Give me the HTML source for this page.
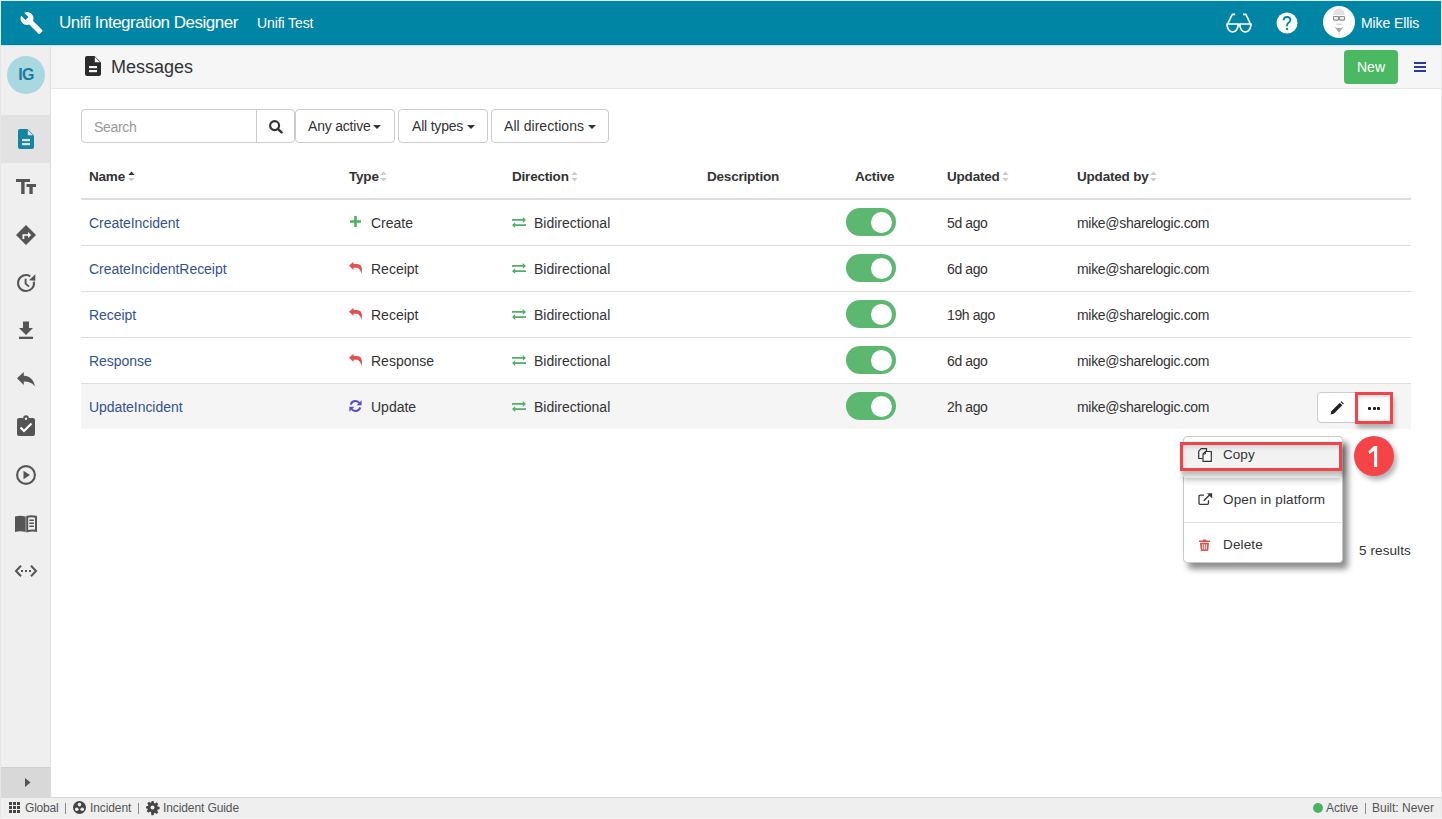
<!DOCTYPE html>
<html><head><meta charset="utf-8">
<style>
*{box-sizing:border-box;margin:0;padding:0}
html,body{width:1442px;height:819px;overflow:hidden}
body{position:relative;background:#fff;font-family:"Liberation Sans",sans-serif;color:#333;font-size:14px}
.a{position:absolute}
.t{position:absolute;white-space:nowrap;line-height:1}
svg{position:absolute;overflow:visible}
.caret{position:absolute;width:0;height:0;border-left:4px solid transparent;border-right:4px solid transparent;border-top:4px solid #333}
.link{color:#34528f}
.tog{position:absolute;left:846px;width:50px;height:28px;border-radius:14px;background:#5cb870}
.tog:after{content:"";position:absolute;left:25px;top:3.5px;width:21px;height:21px;border-radius:50%;background:#fff}
.rb{position:absolute;left:81px;width:1330px;height:1px;background:#ddd}
.hd{font-size:13.5px;font-weight:bold;color:#333;letter-spacing:-0.2px}
.srt{position:absolute;width:6px;height:10px}
</style></head><body>
<!-- frame -->
<div class="a" style="left:0;top:0;width:1442px;height:1px;background:#d9f1f7"></div>
<div class="a" style="left:0;top:0;width:1px;height:46px;background:#d6eef4"></div><div class="a" style="left:0;top:46px;width:1px;height:773px;background:#e6e6e6"></div>
<div class="a" style="left:1441px;top:0;width:1px;height:819px;background:#e8e8e8"></div>
<div class="a" style="left:0;top:818px;width:1442px;height:1px;background:#f4f4f4"></div>

<!-- header -->
<div class="a" id="hdr" style="left:1px;top:1px;width:1440px;height:44px;background:#0185a4"></div>
<svg style="left:19px;top:11px" width="25" height="24" viewBox="0 0 24 24"><path fill="#fff" d="M22.7 19l-9.1-9.1c.9-2.3.4-5-1.5-6.9-2-2-5-2.4-7.4-1.3L9 6 6 9 1.6 4.7C.4 7.1.9 10.1 2.9 12.1c1.9 1.9 4.6 2.4 6.9 1.5l9.1 9.1c.4.4 1 .4 1.4 0l2.3-2.3c.5-.4.5-1.1.1-1.4z"/></svg>
<div class="t" style="left:59px;top:14px;font-size:17px;letter-spacing:-0.5px;color:#fff">Unifi Integration Designer</div>
<div class="t" style="left:257px;top:16px;font-size:14px;color:#fff;letter-spacing:-0.1px">Unifi Test</div>
<!-- glasses -->
<svg style="left:1226px;top:13px" width="26" height="20" viewBox="0 0 26 20"><g fill="none" stroke="#fff" stroke-width="1.7" stroke-linejoin="round"><path d="M1 11H12.3A5.65 8 0 0 1 1 11z"/><path d="M13.7 11H25A5.65 8 0 0 1 13.7 11z"/><path d="M1.3 11.5L6.3 1.3H9.2M24.7 11.5L19.9 1.3H17"/></g></svg>
<!-- help -->
<svg style="left:1276px;top:12px" width="22" height="22" viewBox="0 0 22 22"><circle cx="11" cy="11" r="10.5" fill="#fff"/><path d="M7.6 8.3Q7.8 5 11 5Q14.4 5 14.4 8Q14.4 9.8 12.4 10.9Q11 11.7 11 13.5V14.3" fill="none" stroke="#0185a4" stroke-width="1.8"/><circle cx="11" cy="17" r="1.15" fill="#0185a4"/></svg>
<!-- avatar -->
<svg style="left:1323px;top:6px" width="32" height="32" viewBox="0 0 32 32"><circle cx="16" cy="16" r="16" fill="#fff"/><path d="M10.2 9Q10.5 2.4 16 2.4Q21.5 2.4 21.8 9z" fill="#e2e2e2"/><rect x="10.5" y="10.5" width="5" height="3.6" rx=".6" fill="#f2f2f2" stroke="#8c8c8c" stroke-width="1.1"/><rect x="16.5" y="10.5" width="5" height="3.6" rx=".6" fill="#f2f2f2" stroke="#8c8c8c" stroke-width="1.1"/><path d="M13.5 18.2h5" stroke="#cfcfcf" stroke-width="1.4"/><path d="M11.8 21Q16 23 20.2 21L16.5 26.2H15.5z" fill="#a8a8a8"/><path d="M15.3 26h1.4l-.2 5h-1z" fill="#e6e6e6"/></svg>
<div class="t" style="left:1361px;top:16px;font-size:14px;color:#fff;letter-spacing:-0.1px">Mike Ellis</div>

<div class="a" style="left:1px;top:44px;width:1440px;height:1px;background:#0d7590"></div>
<!-- sidebar -->
<div class="a" style="left:1px;top:45px;width:49px;height:752px;background:#efefef"></div>
<div class="a" style="left:50px;top:45px;width:1px;height:752px;background:#dedede"></div>
<div class="a" style="left:7px;top:56px;width:38px;height:38px;border-radius:50%;background:#aad8e1"></div>
<div class="t" style="left:7px;top:67px;width:38px;text-align:center;font-size:16px;font-weight:bold;color:#1b7d9c;letter-spacing:-0.6px;transform:scaleY(1.08)">IG</div>
<div class="a" style="left:1px;top:115px;width:49px;height:48px;background:#e2e2e2"></div>
<div class="a" style="left:1px;top:768px;width:49px;height:29px;background:#d8d8d8"></div>
<div class="a" style="left:1px;top:767px;width:49px;height:1px;background:#cfcfcf"></div>
<svg style="left:25px;top:778px" width="6" height="9" viewBox="0 0 6 9"><path d="M0 0L5.5 4.5L0 9z" fill="#555"/></svg>
<!-- sidebar icons -->
<svg style="left:18px;top:129px" width="16" height="20" viewBox="0 0 16 20"><path d="M2 0H9.5L16 6.5V18a2 2 0 0 1-2 2H2a2 2 0 0 1-2-2V2a2 2 0 0 1 2-2z" fill="#1684a3"/><path d="M9.8 1L15 6.2H9.8z" fill="#e2e2e2"/><rect x="4" y="10" width="8" height="2.2" fill="#e2e2e2"/><rect x="4" y="14" width="8" height="2.2" fill="#e2e2e2"/></svg>
<svg style="left:16px;top:179px" width="20" height="15" viewBox="0 0 20 15"><g fill="#555"><rect x="0" y="0" width="14" height="3"/><rect x="5.2" y="0" width="3.4" height="15"/><rect x="10.5" y="5" width="9.5" height="3"/><rect x="13.4" y="5" width="3.3" height="10"/></g></svg>
<svg style="left:16px;top:225px" width="20" height="20" viewBox="0 0 20 20"><path d="M10 0L20 10L10 20L0 10z" fill="#555"/><path d="M6.5 14V9.2h5.5V7l3.2 3-3.2 3v-2.2H8.3V14z" fill="#fff"/></svg>
<svg style="left:16px;top:273px" width="20" height="20" viewBox="0 0 20 20"><path d="M14.3 3.3A8 8 0 1 0 17.9 8.6" fill="none" stroke="#555" stroke-width="2"/><path d="M19.3 1.3V7.7L13 7.2z" fill="#555"/><path d="M9.6 5.8V10.6L13 13.6" fill="none" stroke="#555" stroke-width="1.9"/></svg>
<svg style="left:19px;top:321px" width="14" height="18" viewBox="0 0 14 18"><path d="M4 0.5H10V7H14L7 14L0 7H4z" fill="#555"/><rect x="0" y="15.7" width="14" height="2.3" fill="#555"/></svg>
<svg style="left:17px;top:372px" width="18" height="15" viewBox="0 0 18 15"><path d="M0 6.3L6.8 0V3.8C13 4 16.8 8 18 14.5C15.5 11 12 9.5 6.8 9.5V13z" fill="#555"/></svg>
<svg style="left:17px;top:416px" width="18" height="20" viewBox="0 0 18 20"><path d="M2 2H6.2A2.8 2.8 0 0 1 11.8 2H16a2 2 0 0 1 2 2V18a2 2 0 0 1-2 2H2a2 2 0 0 1-2-2V4a2 2 0 0 1 2-2z" fill="#555"/><circle cx="9" cy="2.8" r="1.2" fill="#efefef"/><path d="M3.5 11.5L7 15L14.5 7.5" fill="none" stroke="#fff" stroke-width="2.2"/></svg>
<svg style="left:16px;top:465px" width="20" height="20" viewBox="0 0 20 20"><circle cx="10" cy="10" r="8.9" fill="none" stroke="#555" stroke-width="2.1"/><path d="M7.5 5.8L14 10L7.5 14.2z" fill="#555"/></svg>
<svg style="left:15px;top:515px" width="22" height="17" viewBox="0 0 22 17"><path d="M0 1.5Q5 0 10.7 1.5V17Q5 15.5 0 17z" fill="#555"/><path d="M12.2 1.8Q16.5 0.5 21 1.8V15.8Q16.5 14.8 12.2 16.2z" fill="none" stroke="#555" stroke-width="2"/><path d="M14.3 5.3h4.6M14.3 8.3h4.6M14.3 11.3h4.6" stroke="#555" stroke-width="1.5"/></svg>
<svg style="left:15px;top:565px" width="22" height="12" viewBox="0 0 22 12"><path d="M6 0.8L1 6L6 11.2M16 0.8L21 6L16 11.2" fill="none" stroke="#555" stroke-width="2"/><rect x="6" y="5" width="2" height="2" fill="#555"/><rect x="10" y="5" width="2" height="2" fill="#555"/><rect x="14" y="5" width="2" height="2" fill="#555"/></svg>

<!-- page header -->
<div class="a" style="left:51px;top:45px;width:1390px;height:43px;background:#f6f6f6"></div>
<div class="a" style="left:51px;top:88px;width:1390px;height:1px;background:#e6e6e6"></div>
<div class="a" style="left:1px;top:45px;width:1440px;height:1px;background:#c6eaf4"></div>
<div class="a" style="left:1px;top:46px;width:1440px;height:1px;background:#e4eff2"></div>
<svg style="left:85px;top:56px" width="16" height="20" viewBox="0 0 16 20"><path d="M2 0H9.5L16 6.5V18a2 2 0 0 1-2 2H2a2 2 0 0 1-2-2V2a2 2 0 0 1 2-2z" fill="#2b2b2b"/><path d="M9.8 1L15 6.2H9.8z" fill="#f6f6f6"/><rect x="4" y="10" width="8" height="2.2" fill="#f6f6f6"/><rect x="4" y="14" width="8" height="2.2" fill="#f6f6f6"/></svg>
<div class="t" style="left:111px;top:58px;font-size:18px;color:#333">Messages</div>
<div class="a" style="left:1344px;top:50px;width:54px;height:34px;border-radius:4px;background:#4bb862"></div>
<div class="t" style="left:1344px;top:60px;width:54px;text-align:center;font-size:14px;color:#fff">New</div>
<div class="a" style="left:1414px;top:62px;width:12px;height:2px;background:#2d3a9c"></div>
<div class="a" style="left:1414px;top:66px;width:12px;height:2px;background:#2d3a9c"></div>
<div class="a" style="left:1414px;top:70px;width:12px;height:2px;background:#2d3a9c"></div>

<!-- filters -->
<div class="a" style="left:81px;top:109px;width:214px;height:34px;border:1px solid #ccc;border-radius:4px;background:#fff"></div>
<div class="a" style="left:256px;top:110px;width:1px;height:32px;background:#ccc"></div>
<div class="t" style="left:94px;top:120px;font-size:14px;color:#999;letter-spacing:-0.3px">Search</div>
<svg style="left:269px;top:120px" width="14" height="13" viewBox="0 0 14 13"><circle cx="5.6" cy="5.6" r="4.5" fill="none" stroke="#333" stroke-width="2.1"/><path d="M8.8 8.8L12.6 12.4" stroke="#333" stroke-width="2.4" stroke-linecap="round"/></svg>
<div class="a" style="left:295px;top:109px;width:100px;height:34px;border:1px solid #ccc;border-radius:4px;background:#fff"></div>
<div class="t" style="left:308px;top:119px;font-size:14px;color:#333;letter-spacing:-0.2px">Any active</div>
<div class="caret" style="left:373px;top:125px"></div>
<div class="a" style="left:398px;top:109px;width:90px;height:34px;border:1px solid #ccc;border-radius:4px;background:#fff"></div>
<div class="t" style="left:412px;top:119px;font-size:14px;color:#333;letter-spacing:-0.2px">All types</div>
<div class="caret" style="left:467px;top:125px"></div>
<div class="a" style="left:491px;top:109px;width:118px;height:34px;border:1px solid #ccc;border-radius:4px;background:#fff"></div>
<div class="t" style="left:504px;top:119px;font-size:14px;color:#333;letter-spacing:0.05px">All directions</div>
<div class="caret" style="left:588px;top:125px"></div>
<!-- table header -->
<div class="t hd" style="left:89px;top:169.5px">Name</div>
<svg style="left:128px;top:171px" width="7" height="11" viewBox="0 0 7 11"><path d="M0.3 4L3.5 0.6L6.7 4z" fill="#333"/><path d="M0.3 7L3.5 10.4L6.7 7z" fill="#ccc"/></svg>
<div class="t hd" style="left:349px;top:169.5px">Type</div>
<svg style="left:380px;top:171px" width="7" height="11" viewBox="0 0 7 11"><path d="M0.3 4L3.5 0.6L6.7 4z" fill="#ccc"/><path d="M0.3 7L3.5 10.4L6.7 7z" fill="#ccc"/></svg>
<div class="t hd" style="left:512px;top:169.5px">Direction</div>
<svg style="left:571px;top:171px" width="7" height="11" viewBox="0 0 7 11"><path d="M0.3 4L3.5 0.6L6.7 4z" fill="#ccc"/><path d="M0.3 7L3.5 10.4L6.7 7z" fill="#ccc"/></svg>
<div class="t hd" style="left:707px;top:169.5px">Description</div>
<div class="t hd" style="left:855px;top:169.5px">Active</div>
<div class="t hd" style="left:947px;top:169.5px">Updated</div>
<svg style="left:1002px;top:171px" width="7" height="11" viewBox="0 0 7 11"><path d="M0.3 4L3.5 0.6L6.7 4z" fill="#ccc"/><path d="M0.3 7L3.5 10.4L6.7 7z" fill="#ccc"/></svg>
<div class="t hd" style="left:1077px;top:169.5px">Updated by</div>
<svg style="left:1150px;top:171px" width="7" height="11" viewBox="0 0 7 11"><path d="M0.3 4L3.5 0.6L6.7 4z" fill="#ccc"/><path d="M0.3 7L3.5 10.4L6.7 7z" fill="#ccc"/></svg>
<div class="a" style="left:81px;top:198px;width:1330px;height:2px;background:#ddd"></div>
<div class="a" style="left:81px;top:384px;width:1330px;height:45px;background:#f5f5f5"></div>
<div class="rb" style="top:245px"></div>
<div class="t link" style="left:89px;top:216px;font-size:14px;letter-spacing:-0.05px">CreateIncident</div>
<svg style="left:350px;top:216px" width="11" height="11" viewBox="0 0 11 11"><path d="M4.2 0h2.6v4.2H11v2.6H6.8V11H4.2V6.8H0V4.2h4.2z" fill="#4bb462"/></svg>
<div class="t" style="left:371px;top:216px;font-size:14px">Create</div>
<svg style="left:512px;top:217px" width="14" height="11" viewBox="0 0 14 11"><path d="M0 2H10.8V0L14 2.9L10.8 5.8V3.8H0z" fill="#4db064"/><path d="M14 7.2H3.2V5.3L0 8.1L3.2 11V9H14z" fill="#4db064"/></svg>
<div class="t" style="left:534px;top:216px;font-size:14px">Bidirectional</div>
<div class="tog" style="top:208px"></div>
<div class="t" style="left:947px;top:216px;font-size:14px;letter-spacing:-0.4px">5d ago</div>
<div class="t" style="left:1077px;top:216px;font-size:14px;letter-spacing:-0.3px">mike@sharelogic.com</div>
<div class="rb" style="top:291px"></div>
<div class="t link" style="left:89px;top:262px;font-size:14px;letter-spacing:-0.05px">CreateIncidentReceipt</div>
<svg style="left:349px;top:261px" width="14" height="14" viewBox="0 0 14 14"><path d="M0 4.8L4.5 0.7V2.9H8Q13 3 13 9Q13 11.5 12.3 13Q12 8.5 8.3 6.7H4.5V9z" fill="#e3524f"/></svg>
<div class="t" style="left:371px;top:262px;font-size:14px">Receipt</div>
<svg style="left:512px;top:263px" width="14" height="11" viewBox="0 0 14 11"><path d="M0 2H10.8V0L14 2.9L10.8 5.8V3.8H0z" fill="#4db064"/><path d="M14 7.2H3.2V5.3L0 8.1L3.2 11V9H14z" fill="#4db064"/></svg>
<div class="t" style="left:534px;top:262px;font-size:14px">Bidirectional</div>
<div class="tog" style="top:254px"></div>
<div class="t" style="left:947px;top:262px;font-size:14px;letter-spacing:-0.4px">6d ago</div>
<div class="t" style="left:1077px;top:262px;font-size:14px;letter-spacing:-0.3px">mike@sharelogic.com</div>
<div class="rb" style="top:337px"></div>
<div class="t link" style="left:89px;top:308px;font-size:14px;letter-spacing:-0.05px">Receipt</div>
<svg style="left:349px;top:307px" width="14" height="14" viewBox="0 0 14 14"><path d="M0 4.8L4.5 0.7V2.9H8Q13 3 13 9Q13 11.5 12.3 13Q12 8.5 8.3 6.7H4.5V9z" fill="#e3524f"/></svg>
<div class="t" style="left:371px;top:308px;font-size:14px">Receipt</div>
<svg style="left:512px;top:309px" width="14" height="11" viewBox="0 0 14 11"><path d="M0 2H10.8V0L14 2.9L10.8 5.8V3.8H0z" fill="#4db064"/><path d="M14 7.2H3.2V5.3L0 8.1L3.2 11V9H14z" fill="#4db064"/></svg>
<div class="t" style="left:534px;top:308px;font-size:14px">Bidirectional</div>
<div class="tog" style="top:300px"></div>
<div class="t" style="left:947px;top:308px;font-size:14px;letter-spacing:-0.4px">19h ago</div>
<div class="t" style="left:1077px;top:308px;font-size:14px;letter-spacing:-0.3px">mike@sharelogic.com</div>
<div class="rb" style="top:383px"></div>
<div class="t link" style="left:89px;top:354px;font-size:14px;letter-spacing:-0.05px">Response</div>
<svg style="left:349px;top:353px" width="14" height="14" viewBox="0 0 14 14"><path d="M0 4.8L4.5 0.7V2.9H8Q13 3 13 9Q13 11.5 12.3 13Q12 8.5 8.3 6.7H4.5V9z" fill="#e3524f"/></svg>
<div class="t" style="left:371px;top:354px;font-size:14px">Response</div>
<svg style="left:512px;top:355px" width="14" height="11" viewBox="0 0 14 11"><path d="M0 2H10.8V0L14 2.9L10.8 5.8V3.8H0z" fill="#4db064"/><path d="M14 7.2H3.2V5.3L0 8.1L3.2 11V9H14z" fill="#4db064"/></svg>
<div class="t" style="left:534px;top:354px;font-size:14px">Bidirectional</div>
<div class="tog" style="top:346px"></div>
<div class="t" style="left:947px;top:354px;font-size:14px;letter-spacing:-0.4px">6d ago</div>
<div class="t" style="left:1077px;top:354px;font-size:14px;letter-spacing:-0.3px">mike@sharelogic.com</div>
<div class="t link" style="left:89px;top:400px;font-size:14px;letter-spacing:-0.05px">UpdateIncident</div>
<svg style="left:349px;top:400px" width="13" height="12" viewBox="0 0 13 12"><path d="M10.6 3.2A5 5 0 0 0 1.7 4.6" fill="none" stroke="#5a4fcf" stroke-width="2"/><path d="M12.6 0.3V5.3H7.6z" fill="#5a4fcf"/><path d="M2.4 8.8A5 5 0 0 0 11.3 7.4" fill="none" stroke="#5a4fcf" stroke-width="2"/><path d="M0.4 11.7V6.7H5.4z" fill="#5a4fcf"/></svg>
<div class="t" style="left:371px;top:400px;font-size:14px">Update</div>
<svg style="left:512px;top:401px" width="14" height="11" viewBox="0 0 14 11"><path d="M0 2H10.8V0L14 2.9L10.8 5.8V3.8H0z" fill="#4db064"/><path d="M14 7.2H3.2V5.3L0 8.1L3.2 11V9H14z" fill="#4db064"/></svg>
<div class="t" style="left:534px;top:400px;font-size:14px">Bidirectional</div>
<div class="tog" style="top:392px"></div>
<div class="t" style="left:947px;top:400px;font-size:14px;letter-spacing:-0.4px">2h ago</div>
<div class="t" style="left:1077px;top:400px;font-size:14px;letter-spacing:-0.3px">mike@sharelogic.com</div>
<!-- row actions -->
<div class="a" style="left:1317px;top:392px;width:40px;height:31px;border:1px solid #ccc;border-radius:4px 0 0 4px;background:#fff"></div>
<svg style="left:1330px;top:401px" width="14" height="14" viewBox="0 0 14 14"><path d="M0.6 13.4L1.3 10.2L9.8 1.7L12.3 4.2L3.8 12.7z" fill="#222"/><path d="M10.6 0.9L11.6 0.2L13.8 2.4L13.1 3.4z" fill="#222"/></svg>
<div class="a" style="left:1356px;top:393px;width:37px;height:30px;background:#fff;box-shadow:inset 0 0 6px rgba(0,0,0,.22), inset 0 4px 4px rgba(0,0,0,.1), 1px 5px 5px rgba(0,0,0,.3)"></div>
<div class="a" style="left:1355px;top:392px;width:38px;height:32px;border:3px solid #ed4549"></div>
<div class="a" style="left:1368px;top:406.5px;width:3px;height:3px;border-radius:1px;background:#1a1a1a"></div>
<div class="a" style="left:1372.5px;top:406.5px;width:3px;height:3px;border-radius:1px;background:#1a1a1a"></div>
<div class="a" style="left:1377px;top:406.5px;width:3px;height:3px;border-radius:1px;background:#1a1a1a"></div>

<!-- dropdown -->
<div class="a" style="left:1183px;top:436px;width:160px;height:127px;background:#fff;border:1px solid #c8c8c8;border-radius:4px;box-shadow:5px 6px 6px rgba(0,0,0,.45)"></div>
<div class="a" style="left:1183px;top:443px;width:159px;height:34px;background:#f2f2f2;box-shadow:inset 0 4px 5px rgba(0,0,0,.15), 0 4px 5px rgba(0,0,0,.2)"></div>
<div class="a" style="left:1180px;top:442px;width:162px;height:29px;border:3px solid #ed4549;box-shadow:3px 4px 5px rgba(0,0,0,.25)"></div>
<div class="a" style="left:1184px;top:477px;width:158px;height:1px;background:#e2e2e2"></div>
<div class="a" style="left:1184px;top:522px;width:158px;height:1px;background:#e2e2e2"></div>
<svg style="left:1198px;top:448px" width="14" height="14" viewBox="0 0 14 14"><path d="M4.5 10.5H0.7V3.2L3.2 0.7H8.5V3.5" fill="none" stroke="#333" stroke-width="1.2"/><path d="M5 13.4V6L7.5 3.5H13.3V13.4z" fill="#fff" stroke="#333" stroke-width="1.2"/><path d="M5 6H7.5V3.5" fill="none" stroke="#333" stroke-width="1"/></svg>
<div class="t" style="left:1223px;top:448.3px;font-size:13.5px;color:#333;letter-spacing:0.05px">Copy</div>
<svg style="left:1198px;top:493px" width="15" height="12" viewBox="0 0 15 12"><path d="M6 2.2H2.2Q1 2.2 1 3.4V10.3Q1 11.4 2.2 11.4H9.3Q10.5 11.4 10.5 10.3V7.3" fill="none" stroke="#3a3a3a" stroke-width="1.3"/><path d="M5.8 7.8L12.3 1.3" stroke="#3a3a3a" stroke-width="1.5"/><path d="M9 0.3H14.2V5.5z" fill="#3a3a3a"/></svg>
<div class="t" style="left:1223px;top:493.4px;font-size:13.5px;color:#333;letter-spacing:0.15px">Open in platform</div>
<svg style="left:1199px;top:539px" width="11" height="12" viewBox="0 0 11 12"><path d="M0 1.5H3.5L4.2 0.5H6.8L7.5 1.5H11V3H0z" fill="#d9534f"/><path d="M1 3.8H10L9.3 11.2Q9.2 12 8.4 12H2.6Q1.8 12 1.7 11.2z" fill="#d9534f"/><path d="M3.7 5.2V10.5M5.5 5.2V10.5M7.3 5.2V10.5" stroke="#fff" stroke-width="0.9"/></svg>
<div class="t" style="left:1223px;top:538.4px;font-size:13.5px;color:#333;letter-spacing:0.15px">Delete</div>
<div class="a" style="left:1354px;top:436px;width:40px;height:40px;border-radius:50%;background:#f44448;box-shadow:3px 4px 5px rgba(0,0,0,.3)"></div>
<svg style="left:1354px;top:436px" width="40" height="40" viewBox="0 0 40 40"><path d="M20.1 10H23.2V31.1H20.1V14.6L15.4 18.3L14.4 15.6z" fill="#fff"/></svg>
<div class="t" style="left:1359px;top:544.1px;font-size:13.5px;color:#333;letter-spacing:0.1px">5 results</div>

<!-- footer -->
<div class="a" style="left:1px;top:797px;width:1440px;height:1px;background:#d8d8d8"></div>
<div class="a" style="left:1px;top:798px;width:1440px;height:20px;background:#efefef"></div>
<svg style="left:9px;top:802px" width="11" height="11" viewBox="0 0 11 11"><g fill="#444"><rect x="0" y="0" width="3" height="3"/><rect x="4" y="0" width="3" height="3"/><rect x="8" y="0" width="3" height="3"/><rect x="0" y="4" width="3" height="3"/><rect x="4" y="4" width="3" height="3"/><rect x="8" y="4" width="3" height="3"/><rect x="0" y="8" width="3" height="3"/><rect x="4" y="8" width="3" height="3"/><rect x="8" y="8" width="3" height="3"/></g></svg>
<div class="t" style="left:25px;top:802px;font-size:12px;color:#555;letter-spacing:-0.2px">Global</div>
<div class="a" style="left:65px;top:803px;width:1px;height:11px;background:#8a8a8a"></div>
<svg style="left:73px;top:801px" width="13" height="13" viewBox="0 0 13 13"><circle cx="6.5" cy="6.5" r="6.5" fill="#444"/><circle cx="6.5" cy="3.6" r="1.8" fill="#efefef"/><circle cx="3.8" cy="8.3" r="1.8" fill="#efefef"/><circle cx="9.2" cy="8.3" r="1.8" fill="#efefef"/></svg>
<div class="t" style="left:90px;top:802px;font-size:12px;color:#555;letter-spacing:-0.1px">Incident</div>
<div class="a" style="left:138px;top:803px;width:1px;height:11px;background:#8a8a8a"></div>
<svg style="left:146px;top:801px" width="13" height="13" viewBox="0 0 13 13"><path fill="#444" d="M5.4 0h2.2l.4 1.9 1.1.5 1.6-1.1 1.6 1.6-1.1 1.6.5 1.1 1.9.4v2.2l-1.9.4-.5 1.1 1.1 1.6-1.6 1.6-1.6-1.1-1.1.5-.4 1.9H5.4L5 11.1l-1.1-.5-1.6 1.1-1.6-1.6 1.1-1.6-.5-1.1L0 7.6V5.4l1.9-.4.5-1.1-1.1-1.6 1.6-1.6 1.6 1.1 1.1-.5z"/><circle cx="6.5" cy="6.5" r="2" fill="#efefef"/></svg>
<div class="t" style="left:163px;top:802px;font-size:12px;color:#555;letter-spacing:-0.1px">Incident Guide</div>
<div class="a" style="left:1313px;top:803px;width:10px;height:10px;border-radius:50%;background:#47b462"></div>
<div class="t" style="left:1326px;top:802px;font-size:12px;color:#555;letter-spacing:-0.1px">Active</div>
<div class="a" style="left:1365px;top:803px;width:1px;height:11px;background:#8a8a8a"></div>
<div class="t" style="left:1372px;top:802px;font-size:12px;color:#555;letter-spacing:0px">Built: Never</div>
</body></html>
